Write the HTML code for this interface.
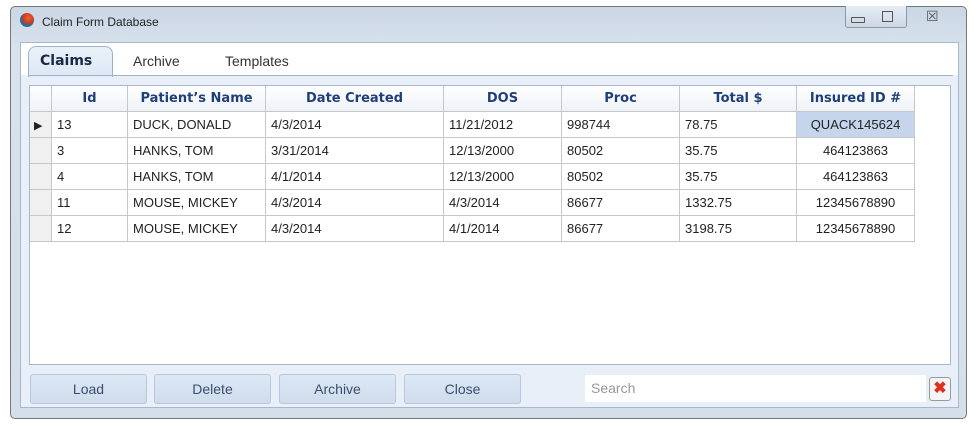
<!DOCTYPE html><html><head><style>
body{margin:0;width:979px;height:426px;background:#fff;position:relative;overflow:hidden;font-family:"Liberation Sans",sans-serif}
.a{position:absolute}
.win{left:10px;top:6px;width:957px;height:413px;border:1px solid #777;border-radius:5px;background:linear-gradient(#c9d6e4,#d8e2ec 40px,#d4dfea);box-sizing:border-box}
.cell{position:absolute;box-sizing:border-box;border-right:1px solid #c8c8c8;border-bottom:1px solid #c8c8c8;font-size:13px;color:#222;padding-left:5px;line-height:25px;height:26px}
.h{font-family:"DejaVu Sans",sans-serif;font-weight:bold;color:#1f3f7a;text-align:center;padding:0;font-size:13px;background:linear-gradient(#fff,#eef2f7)}
.btn{position:absolute;top:374px;height:30px;width:117px;box-sizing:border-box;border:1px solid #b8c8dc;border-radius:3px;background:linear-gradient(#dde8f5,#cfdcec);color:#3a4f6e;font-size:14px;text-align:center;line-height:28px}
</style></head><body>
<div class="a win"></div>
<div class="a" style="left:20px;top:13px;width:14px;height:14px;border-radius:50%;background:radial-gradient(circle at 60% 35%,#f06030,#c03a20 50%,#2a6a9a 55%)"></div>
<div class="a" style="left:42px;top:15px;font-size:12px;color:#222">Claim Form Database</div>
<div class="a" style="left:845px;top:6px;width:60px;height:21px;border:1px solid #8a98aa;border-top:none;border-radius:0 0 3px 3px;background:linear-gradient(#e6edf5,#cdd8e4)"></div>
<div class="a" style="left:851px;top:17px;width:12px;height:4px;border:1px solid #555;border-radius:1px"></div>
<div class="a" style="left:882px;top:11px;width:9px;height:9px;border:1px solid #555"></div>
<div class="a" style="left:926px;top:8px;font-size:14px;color:#555">☒</div>
<div class="a" style="left:20px;top:42px;width:939px;height:366px;background:#e8eff8;border:1px solid #a8b8cc;box-sizing:border-box"></div>
<div class="a" style="left:21px;top:43px;width:937px;height:32px;background:#fff"></div>
<div class="a" style="left:28px;top:46px;width:83px;height:30px;background:linear-gradient(#e9f1fa,#dde8f4);border:1px solid #9fb3cc;border-bottom:none;border-radius:8px 8px 0 0"></div>
<div class="a" style="left:40px;top:53px;font-size:14px;font-weight:bold;color:#1a2a44;font-family:'DejaVu Sans',sans-serif">Claims</div>
<div class="a" style="left:133px;top:53px;font-size:14px;color:#333">Archive</div>
<div class="a" style="left:225px;top:53px;font-size:14px;color:#333">Templates</div>
<div class="a" style="left:28px;top:75px;width:925px;height:1px;background:#9fb3cc"></div>
<div class="a" style="left:29px;top:85px;width:922px;height:280px;background:#fff;border:1px solid #a8b8cc;box-sizing:border-box"></div>
<div id="g"></div>
<div class="btn" style="left:30px">Load</div>
<div class="btn" style="left:154px">Delete</div>
<div class="btn" style="left:279px">Archive</div>
<div class="btn" style="left:404px">Close</div>
<div class="a" style="left:585px;top:375px;width:341px;height:27px;background:#fff"></div>
<div class="a" style="left:591px;top:380px;font-size:14px;color:#999">Search</div>
<div class="a" style="left:929px;top:377px;width:20px;height:22px;border:1px solid #999;border-radius:3px;background:#f4f4f4;color:#e03020;font-weight:bold;text-align:center;line-height:21px;font-size:16px">✖</div>
<script>
var cols=[30,52,128,266,444,562,680,797,915];
var hd=["","Id","Patient’s Name","Date Created","DOS","Proc","Total $","Insured ID #"];
var rows=[["13","DUCK, DONALD","4/3/2014","11/21/2012","998744","78.75","QUACK145624"],["3","HANKS, TOM","3/31/2014","12/13/2000","80502","35.75","464123863"],["4","HANKS, TOM","4/1/2014","12/13/2000","80502","35.75","464123863"],["11","MOUSE, MICKEY","4/3/2014","4/3/2014","86677","1332.75","12345678890"],["12","MOUSE, MICKEY","4/3/2014","4/1/2014","86677","3198.75","12345678890"]];
var s="";
for(var c=0;c<8;c++){s+='<div class="cell h" style="left:'+cols[c]+'px;top:86px;width:'+(cols[c+1]-cols[c])+'px">'+hd[c]+'</div>';}
rows.forEach(function(r,i){var t=112+i*26;
s+='<div class="cell" style="left:30px;top:'+t+'px;width:22px;background:#f0f0f0;padding:0 0 0 4px">'+(i==0?'<span style="font-size:11px">▶</span>':'')+'</div>';
for(var c=0;c<7;c++){var st='left:'+cols[c+1]+'px;top:'+t+'px;width:'+(cols[c+2]-cols[c+1])+'px;';if(c==6)st+='text-align:center;padding:0;';if(c==6&&i==0)st+='background:#c5d5ec;';s+='<div class="cell" style="'+st+'">'+r[c]+'</div>';}});
document.getElementById("g").innerHTML=s;
</script>
</body></html>
